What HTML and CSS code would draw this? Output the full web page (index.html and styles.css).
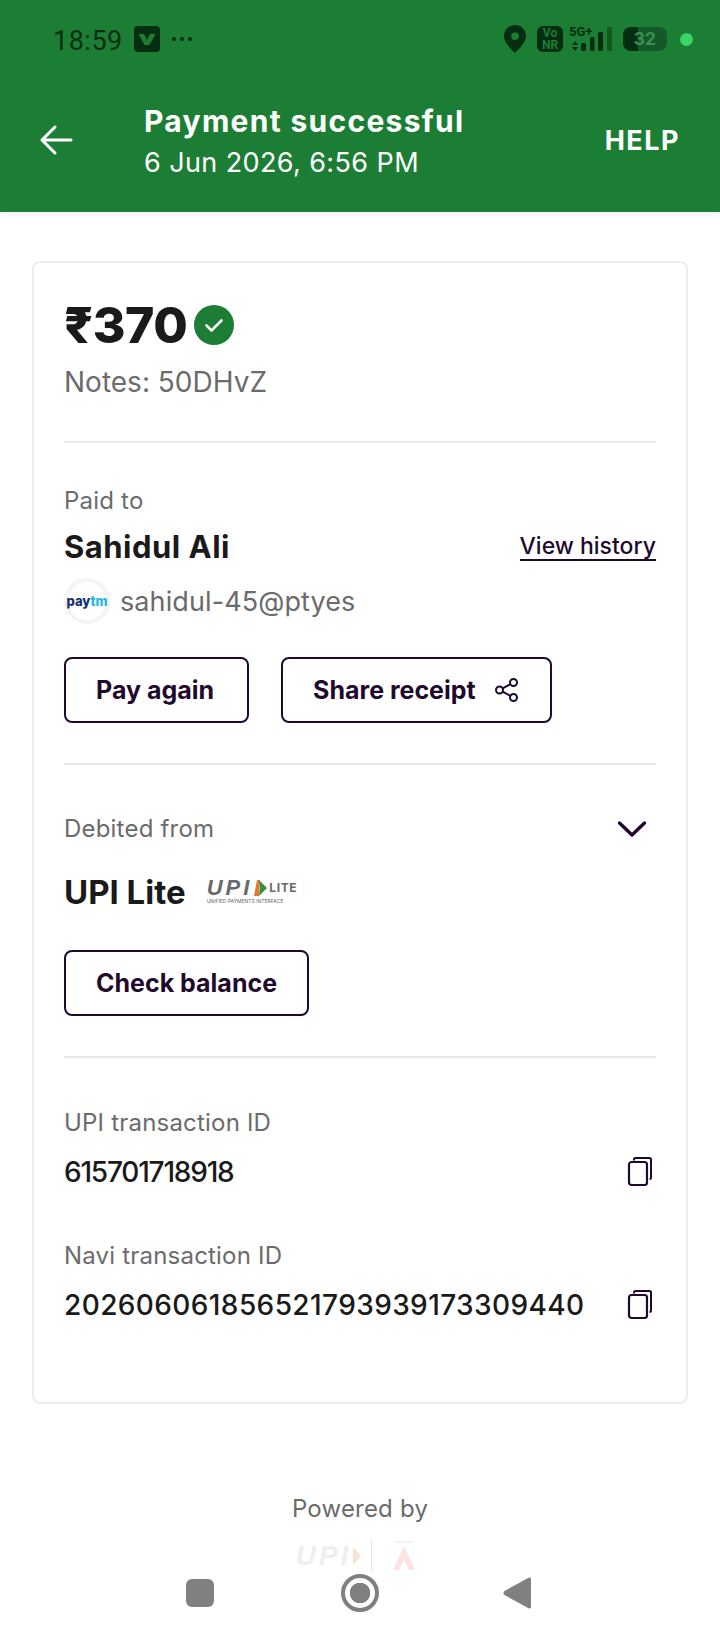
FILE: index.html
```html
<!DOCTYPE html>
<html lang="en">
<head>
  <meta charset="UTF-8" />
  <meta name="viewport" content="width=device-width, initial-scale=1.0" />
  <title>Payment successful</title>
  <link rel="stylesheet" href="styles.css">
</head>
<body>
  <div class="screen">
    <header class="header">
      <div class="status-bar">
        <div class="status-left">
          <span class="clock">18:59</span>
          <span class="app-badge">
            <svg width="26" height="26" viewBox="0 0 26 26"><rect width="26" height="26" rx="4" fill="#052e10"/><path d="M4.500 8h5.500l3 6 3-6h5.500l-6 11h-5z" fill="#1c7e34"/></svg>
          </span>
          <span class="more-dots"><i></i><i></i><i></i></span>
        </div>
        <div class="status-right">
          <svg class="pin" width="24" height="30" viewBox="0 0 24 30"><path fill-rule="evenodd" d="M12 1C5.800 1 1 5.800 1 12c0 6.600 6.800 12.600 11 17 4.200-4.400 11-10.400 11-17C23 5.800 18.200 1 12 1zm0 7.500a3.800 3.800 0 1 1 0 7.600 3.800 3.800 0 0 1 0-7.600z" fill="#052e10"/></svg>
          <span class="vonr">Vo<br>NR</span>
          <span class="signal">
            <span class="signal-label">5G+</span>
            <svg width="44" height="25" viewBox="0 0 44 25"><path d="M3 18l3-4 3 4zM3 20l3 4 3-4z" fill="#052e10"/><rect x="12" y="16" width="5" height="8" rx="1.500" fill="#052e10"/><rect x="21" y="10" width="4.500" height="14" rx="1.500" fill="#052e10"/><rect x="29" y="5" width="5" height="19" rx="1.500" fill="#052e10"/><rect x="38" y="0" width="5" height="24" fill="#11591f"/></svg>
          </span>
          <span class="battery"><span class="battery-fill"></span><span class="battery-num">32</span></span>
          <span class="status-dot"></span>
        </div>
      </div>
      <div class="title-bar">
        <svg class="back-icon" width="34" height="32" viewBox="0 0 34 32"><path d="M32 16H3M16 3L3 16l13 13" fill="none" stroke="#fff" stroke-width="3" stroke-linecap="round" stroke-linejoin="round"/></svg>
        <div class="title-text">
          <div class="title">Payment successful</div>
          <div class="subtitle">6 Jun 2026, 6:56 PM</div>
        </div>
        <div class="help">HELP</div>
      </div>
    </header>

    <main class="content">
      <section class="card">
        <div class="block block-amount">
          <div class="amount-row">
            <span class="amount">₹370</span>
            <svg width="40" height="40" viewBox="0 0 40 40"><circle cx="20" cy="20" r="20" fill="#1c7e34"/><path d="M12.500 20.500l5 5 10-10" fill="none" stroke="#fff" stroke-width="2.600" stroke-linecap="round" stroke-linejoin="round"/></svg>
          </div>
          <div class="notes">Notes: 50DHvZ</div>
        </div>

        <div class="block block-paid">
          <div class="label">Paid to</div>
          <div class="name-row">
            <span class="name">Sahidul Ali</span>
            <a class="history-link">View history</a>
          </div>
          <div class="handle-row">
            <span class="paytm-logo"><span class="pay">pay</span><span class="tm">tm</span></span>
            <span class="handle">sahidul-45@ptyes</span>
          </div>
          <div class="actions">
            <button class="outline-btn btn-pay">Pay again</button>
            <button class="outline-btn btn-share">Share receipt
              <svg width="26" height="26" viewBox="0 0 26 26"><g fill="none" stroke="#1f0a2e" stroke-width="2"><circle cx="19.500" cy="5.500" r="3.500"/><circle cx="19.500" cy="20.500" r="3.500"/><circle cx="5.500" cy="13" r="3.500"/><path d="M8.600 11.400l7.800-4.300M8.600 14.600l7.800 4.300"/></g></svg>
            </button>
          </div>
        </div>

        <div class="block block-debit">
          <div class="label-row">
            <div class="label">Debited from</div>
            <svg width="30" height="18" viewBox="0 0 30 18"><path d="M2.500 3L15 15 27.500 3" fill="none" stroke="#1f0a2e" stroke-width="3.400" stroke-linecap="round" stroke-linejoin="round"/></svg>
          </div>
          <div class="method-row">
            <span class="method">UPI Lite</span>
            <span class="upi-logo">
              <span class="upi-mark">UPI</span>
              <svg width="13" height="16" viewBox="0 0 13 16"><path d="M3 0h3l-1 16H0z" fill="#e8772e"/><path d="M5 0l8 8-8 8 1-8z" fill="#2f8f46"/></svg>
              <span class="upi-lite">LITE</span>
              <span class="upi-small">UNIFIED PAYMENTS INTERFACE</span>
            </span>
          </div>
          <button class="outline-btn btn-balance">Check balance</button>
        </div>

        <div class="block block-ids">
          <div class="label">UPI transaction ID</div>
          <div class="id-row">
            <span class="id-value id-short">615701718918</span>
            <svg class="copy-icon" width="26" height="30" viewBox="0 0 26 30"><path d="M7 3.500V2.500A1.500 1.500 0 0 1 8.500 1h14A1.500 1.500 0 0 1 24 2.500v18a1.500 1.500 0 0 1-1.500 1.500" fill="none" stroke="#1f0a2e" stroke-width="2"/><rect x="2" y="5" width="18" height="23" rx="2.500" fill="#fff" stroke="#1f0a2e" stroke-width="2.200"/></svg>
          </div>
          <div class="label label-navi">Navi transaction ID</div>
          <div class="id-row">
            <span class="id-value id-long">202606061856521793939173309440</span>
            <svg class="copy-icon" width="26" height="30" viewBox="0 0 26 30"><path d="M7 3.500V2.500A1.500 1.500 0 0 1 8.500 1h14A1.500 1.500 0 0 1 24 2.500v18a1.500 1.500 0 0 1-1.500 1.500" fill="none" stroke="#1f0a2e" stroke-width="2"/><rect x="2" y="5" width="18" height="23" rx="2.500" fill="#fff" stroke="#1f0a2e" stroke-width="2.200"/></svg>
          </div>
        </div>
      </section>

      <div class="powered">
        <div class="powered-text">Powered by</div>
        <div class="powered-logos">
          <span class="powered-upi">UPI</span>
          <svg width="12" height="20" viewBox="0 0 12 20"><path d="M2 1l8 9-8 9z" fill="#f6e3d4"/></svg>
          <span class="powered-sep"></span>
          <svg width="24" height="30" viewBox="0 0 24 30"><path d="M3 1h18" stroke="#f6f0f0" stroke-width="1.500"/><path d="M12 5L1 29h6l5-10 5 10h6z" fill="#fbe3e6"/></svg>
        </div>
      </div>
    </main>

    <nav class="nav-bar">
      <span class="nav-square"></span>
      <span class="nav-home"></span>
      <svg class="nav-back" width="28" height="34" viewBox="0 0 28 34"><path d="M26 1.500a2 2 0 0 1 2 1V31.500a2 2 0 0 1-2 1L1.500 19a2.500 2.500 0 0 1 0-4z" fill="#808080"/></svg>
    </nav>
  </div>
</body>
</html>
```
FILE: styles.css
```css
* {
  box-sizing: border-box;
}

body {
  font-family: "Inter", "Noto Sans", sans-serif;
  background-color: #fff;
  color: #1a1a1a;
  margin: 0;
  padding: 0;
}

.screen {
  width: 720px;
  height: 1640px;
  display: flex;
  flex-direction: column;
  overflow: hidden;
}

.header {
  background-color: #1c7e34;
  height: 212px;
  flex: none;
  box-shadow: 0 2px 8px rgba(0,0,0,0.08);
}

.status-bar {
  height: 78px;
  display: flex;
  align-items: center;
  justify-content: space-between;
  padding: 0 27px 0 53px;
}

.status-left,
.status-right {
  display: flex;
  align-items: center;
}

.clock {
  font-family: "Roboto", sans-serif;
  font-size: 27px;
  color: #052e10;
  letter-spacing: 0.5px;
  margin-top: 4px;
}

.app-badge {
  display: flex;
  margin-left: 11px;
}

.more-dots {
  display: flex;
  gap: 4px;
  margin-left: 12px;
}

.more-dots i {
  width: 4px;
  height: 4px;
  border-radius: 50%;
  background-color: #052e10;
}

.vonr {
  width: 26px;
  height: 26px;
  margin-left: 10px;
  border-radius: 6px;
  background-color: #052e10;
  color: #1c7e34;
  font-family: "Roboto", sans-serif;
  font-size: 12px;
  font-weight: 700;
  line-height: 12px;
  text-align: center;
  padding-top: 1px;
}

.signal {
  position: relative;
  width: 44px;
  margin-left: 6px;
  display: flex;
}

.signal-label {
  position: absolute;
  left: 0;
  top: -2px;
  font-family: "Roboto", sans-serif;
  font-size: 13px;
  font-weight: 700;
  line-height: 13px;
  color: #052e10;
}

.battery {
  position: relative;
  width: 44px;
  height: 24px;
  margin-left: 10px;
  border-radius: 8px;
  background-color: #14592a;
  overflow: hidden;
}

.battery-fill {
  position: absolute;
  left: 0;
  top: 0;
  bottom: 0;
  width: 15px;
  background-color: #052e10;
}

.battery-num {
  position: absolute;
  left: 11px;
  top: 0;
  font-family: "Roboto", sans-serif;
  font-size: 19px;
  font-weight: 700;
  line-height: 24px;
  color: #3c9053;
}

.status-dot {
  width: 13px;
  height: 13px;
  margin-left: 13px;
  border-radius: 50%;
  background-color: #3ad46a;
}

.title-bar {
  display: flex;
  align-items: center;
  margin-top: 23px;
  padding: 0 40px 0 39px;
  color: #fff;
}

.back-icon {
  margin-bottom: 4px;
}

.title-text {
  margin-left: 71px;
  flex: 1;
}

.title {
  font-size: 30px;
  font-weight: 700;
  letter-spacing: 1.3px;
  line-height: 40px;
}

.subtitle {
  font-size: 27px;
  letter-spacing: 0.4px;
  line-height: 40px;
  margin-top: 2px;
}

.help {
  font-size: 27px;
  font-weight: 700;
  letter-spacing: 1.5px;
  margin-bottom: 4px;
}

.content {
  flex: 1;
  min-height: 0;
  overflow: hidden;
  padding: 49px 32px 0;
}

.card {
  border: 2px solid #eceeee;
  border-radius: 8px;
  height: 1143px;
  padding: 0 30px;
}

.block {
  border-bottom: 2px solid #e8e8e8;
}

.block-ids {
  border-bottom: none;
  padding-top: 49px;
}

.block-amount {
  height: 180px;
  padding-top: 33px;
}

.amount-row {
  display: flex;
  align-items: center;
  gap: 7px;
}

.amount {
  font-size: 50px;
  font-weight: 800;
  letter-spacing: -0.5px;
  line-height: 58px;
}

.notes {
  font-size: 28px;
  line-height: 36px;
  margin-top: 10px;
  color: #6b6b6b;
}

.label {
  font-size: 24px;
  letter-spacing: 0.2px;
  line-height: 32px;
  color: #6b6b6b;
}

.block-paid {
  height: 322px;
  padding-top: 42px;
}

.name-row {
  display: flex;
  align-items: center;
  justify-content: space-between;
  margin-top: 12px;
}

.name {
  font-size: 31px;
  font-weight: 700;
  letter-spacing: 0.5px;
  line-height: 36px;
}

.history-link {
  font-size: 23px;
  line-height: 26px;
  font-weight: 500;
  color: #1f0a2e;
  border-bottom: 2px solid #1f0a2e;
}

.handle-row {
  display: flex;
  align-items: center;
  margin-top: 13px;
}

.paytm-logo {
  width: 46px;
  height: 46px;
  border: 4px solid #f4f4f4;
  border-radius: 50%;
  display: flex;
  align-items: center;
  justify-content: center;
  font-size: 13px;
  font-weight: 800;
}

.pay {
  color: #12336e;
}

.tm {
  color: #22b4ea;
}

.handle {
  font-size: 27px;
  letter-spacing: 0.1px;
  margin-left: 10px;
  color: #6b6b6b;
}

.actions {
  display: flex;
  gap: 32px;
  margin-top: 33px;
}

.outline-btn {
  font-family: inherit;
  font-size: 25px;
  font-weight: 700;
  height: 66px;
  padding: 0 30px;
  color: #1f0a2e;
  background-color: #fff;
  border: 2px solid #1f0a2e;
  border-radius: 8px;
  display: flex;
  align-items: center;
  gap: 18px;
}

.btn-pay {
  padding-right: 33px;
}

.block-debit {
  height: 293px;
  padding-top: 48px;
}

.label-row {
  display: flex;
  align-items: center;
  justify-content: space-between;
  padding-right: 9px;
}

.method-row {
  display: flex;
  align-items: center;
  margin-top: 27px;
}

.method {
  font-size: 33px;
  font-weight: 700;
  line-height: 40px;
}

.upi-logo {
  position: relative;
  display: flex;
  align-items: flex-start;
  margin-left: 21px;
  width: 92px;
  height: 24px;
  color: #67696c;
}

.upi-mark {
  font-family: "Liberation Sans", sans-serif;
  font-size: 22px;
  font-style: italic;
  font-weight: 700;
  letter-spacing: 3px;
  line-height: 16px;
  margin-right: 2px;
}

.upi-lite {
  font-size: 12px;
  font-weight: 700;
  letter-spacing: 0.6px;
  line-height: 16px;
  margin-left: 2px;
}

.upi-small {
  position: absolute;
  left: 0;
  bottom: 0;
  font-size: 5px;
  line-height: 6px;
  white-space: nowrap;
}

.btn-balance {
  margin-top: 38px;
}

.id-row {
  display: flex;
  align-items: center;
  justify-content: space-between;
  padding-right: 3px;
  margin-top: 15px;
}

.id-value {
  font-size: 28px;
  font-weight: 500;
  line-height: 36px;
}

.id-short {
  letter-spacing: -1.2px;
}

.id-long {
  letter-spacing: 0.4px;
}

.label-navi {
  margin-top: 50px;
}

.powered {
  text-align: center;
  margin-top: 89px;
}

.powered-text {
  font-size: 24px;
  letter-spacing: 0.2px;
  line-height: 32px;
  color: #6b6b6b;
}

.powered-logos {
  display: flex;
  align-items: center;
  justify-content: center;
  margin-top: 14px;
  padding-right: 8px;
}

.powered-upi {
  font-family: "Liberation Sans", sans-serif;
  font-size: 28px;
  font-style: italic;
  font-weight: 700;
  letter-spacing: 3px;
  color: #efefef;
}

.powered-sep {
  width: 1px;
  height: 34px;
  margin: 0 20px 0 8px;
  background-color: #e8e8e8;
}

.nav-bar {
  height: 68px;
  flex: none;
  background-color: #fff;
  display: flex;
  align-items: flex-start;
  justify-content: space-between;
  padding: 7px 189px 0 186px;
}

.nav-square {
  width: 28px;
  height: 28px;
  border-radius: 6px;
  background-color: #808080;
}

.nav-home {
  width: 38px;
  height: 38px;
  margin-top: -5px;
  margin-left: 3px;
  border-radius: 50%;
  border: 4px solid #808080;
  background: radial-gradient(circle, #808080 0 10px, #fff 10.500px);
}

.nav-back {
  margin-top: -3px;
}
```
